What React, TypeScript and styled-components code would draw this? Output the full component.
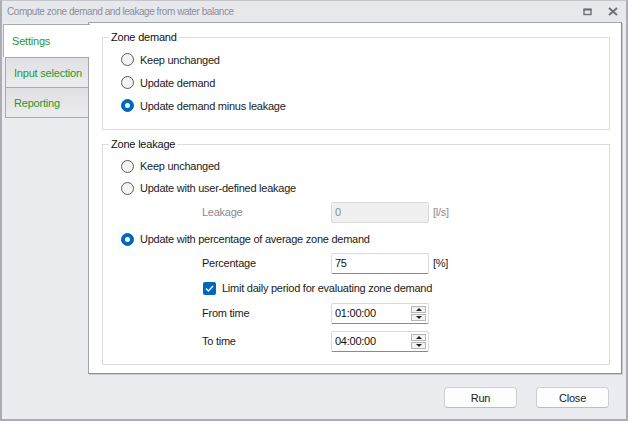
import React from "react";
import styled, { createGlobalStyle } from "styled-components";

const GlobalStyle = createGlobalStyle`
  html, body {
    margin: 0;
    padding: 0;
    background: #ebecef;
  }
  body {
    font-family: "Liberation Sans", Arial, sans-serif;
    font-size: 11px;
    color: #1b1b1b;
  }
`;

const Window = styled.div`
  width: 628px;
  height: 421px;
  box-sizing: border-box;
  display: flex;
  flex-direction: column;
  background: #ebecef;
  border: 2px solid #acacb4;
  border-top: 1px solid #c4c4cb;
`;

const TitleBar = styled.div`
  height: 21px;
  display: flex;
  align-items: center;
  padding-left: 5px;
  background: #e7e8ec;
  color: #8e8e99;
  font-size: 10px;
  letter-spacing: -0.45px;
`;

const TitleText = styled.span`
  flex: 1;
`;

const TitleButton = styled.span`
  width: 26px;
  display: flex;
  justify-content: center;
  align-items: center;
`;

const Body = styled.div`
  display: flex;
  height: 352px;
`;

const TabColumn = styled.div`
  width: 86px;
  display: flex;
  flex-direction: column;
  align-items: flex-end;
`;

const Tab = styled.div<{ $active?: boolean }>`
  box-sizing: border-box;
  display: flex;
  align-items: center;
  padding-left: 8px;
  color: #1f9a2a;
  font-size: 11px;
  letter-spacing: -0.2px;
  white-space: nowrap;
  position: relative;
  ${(p) =>
    p.$active
      ? `
    width: 87px;
    height: 33px;
    margin-top: 2px;
    margin-right: -2px;
    z-index: 1;
    background: #ffffff;
    border-top: 1px solid #a9a9b2;
    border-left: 1px solid #a9a9b2;
  `
      : `
    width: 83px;
    height: 31px;
    margin-top: -1px;
    background: linear-gradient(#e0e0e5, #ececef);
    border: 1px solid #a9a9b2;
    border-right: none;
  `}
  &:nth-child(2) {
    margin-top: 0;
  }
`;

const Panel = styled.div`
  width: 534px;
  box-sizing: border-box;
  background: #ffffff;
  border: 1px solid #a3a3ac;
  border-right-color: #8f8f99;
  border-bottom-color: #8f8f99;
  box-shadow: 1px 1px 0 #c9c9d0;
  padding: 8px 11px 0 13px;
`;

const Group = styled.fieldset<{ $gap?: number }>`
  margin: ${(p) => p.$gap ?? 0}px 0 0 0;
  padding: 0 0 12px 6px;
  border: 1px solid #dcdcdc;
`;

const Legend = styled.legend`
  padding: 0 2px;
  font-size: 11px;
  letter-spacing: -0.2px;
  line-height: 13px;
  color: #111;
`;

const Rows = styled.div<{ $top: number }>`
  padding-left: 12px;
  padding-top: ${(p) => p.$top}px;
  display: flex;
  flex-direction: column;
`;

const Row = styled.div<{ $gap?: number; $indent?: boolean; $h?: number }>`
  height: ${(p) => p.$h ?? 22}px;
  margin-top: ${(p) => p.$gap ?? 0}px;
  display: flex;
  align-items: center;
  padding-left: ${(p) => (p.$indent ? 81 : 0)}px;
  font-size: 11px;
  letter-spacing: -0.25px;
  white-space: nowrap;
`;

const RadioCircle = styled.span<{ $checked?: boolean }>`
  width: 13px;
  height: 13px;
  box-sizing: border-box;
  border-radius: 50%;
  margin-right: 6px;
  display: flex;
  align-items: center;
  justify-content: center;
  ${(p) =>
    p.$checked
      ? `background: #0067c0; border: 1px solid #0067c0;`
      : `background: #f4f4f4; border: 1px solid #5c5c5c;`}
  &::after {
    content: "";
    display: ${(p) => (p.$checked ? "block" : "none")};
    width: 5px;
    height: 5px;
    border-radius: 50%;
    background: #ffffff;
  }
`;

const CheckBox = styled.span`
  width: 13px;
  height: 13px;
  border-radius: 2px;
  background: #0067c0;
  margin-left: 1px;
  margin-right: 6px;
  display: flex;
  align-items: center;
  justify-content: center;
`;

const Label = styled.span<{ $disabled?: boolean }>`
  width: 129px;
  color: ${(p) => (p.$disabled ? "#8c8c8c" : "#1b1b1b")};
`;

const Field = styled.div<{ $disabled?: boolean }>`
  width: 98px;
  height: 21px;
  box-sizing: border-box;
  display: flex;
  align-items: center;
  padding-left: 3px;
  background: ${(p) => (p.$disabled ? "#f0f0f0" : "#ffffff")};
  border: 1px solid #dadada;
  border-bottom-color: ${(p) => (p.$disabled ? "#dadada" : "#8a8a8a")};
  color: ${(p) => (p.$disabled ? "#8c8c8c" : "#111")};
  border-radius: 2px;
`;

const FieldText = styled.span`
  flex: 1;
`;

const Unit = styled.span<{ $disabled?: boolean }>`
  margin-left: 4px;
  color: ${(p) => (p.$disabled ? "#8c8c8c" : "#1b1b1b")};
`;

const Spinner = styled.div`
  width: 15px;
  margin-right: 2px;
  display: flex;
  flex-direction: column;
  gap: 1px;
`;

const SpinHalf = styled.div<{ $down?: boolean }>`
  height: 7px;
  box-sizing: border-box;
  border: 1px solid #b5b5b5;
  background: #f3f3f3;
  display: flex;
  align-items: center;
  justify-content: center;
  &::after {
    content: "";
    border-left: 3px solid transparent;
    border-right: 3px solid transparent;
    ${(p) =>
      p.$down ? "border-top: 3px solid #222;" : "border-bottom: 3px solid #222;"}
  }
`;

const Footer = styled.div`
  flex: 1;
  display: flex;
  justify-content: flex-end;
  align-items: flex-start;
  gap: 19px;
  padding: 13px 17px 0 0;
`;

const Button = styled.button`
  width: 73px;
  height: 21px;
  box-sizing: border-box;
  border: 1px solid #cfcfcf;
  border-bottom-color: #bdbdbd;
  border-radius: 4px;
  background: #fdfdfd;
  font-family: "Liberation Sans", Arial, sans-serif;
  font-size: 11px;
  letter-spacing: -0.2px;
  color: #1b1b1b;
  padding: 0;
`;

const Radio: React.FC<{ checked?: boolean; children: React.ReactNode }> = ({
  checked,
  children,
}) => (
  <>
    <RadioCircle $checked={checked} />
    <span>{children}</span>
  </>
);

const TimeField: React.FC<{ value: string }> = ({ value }) => (
  <Field>
    <FieldText>{value}</FieldText>
    <Spinner>
      <SpinHalf />
      <SpinHalf $down />
    </Spinner>
  </Field>
);

export default function App() {
  return (
    <>
      <GlobalStyle />
      <Window>
        <TitleBar>
          <TitleText>Compute zone demand and leakage from water balance</TitleText>
          <TitleButton>
            <svg width="9" height="8" viewBox="0 0 9 8">
              <rect x="1" y="1.5" width="7" height="5" fill="none" stroke="#6e6e78" strokeWidth="1.4" />
              <rect x="0.5" y="0.5" width="8" height="2" fill="#6e6e78" />
            </svg>
          </TitleButton>
          <TitleButton>
            <svg width="10" height="9" viewBox="0 0 10 9">
              <path d="M1 1 L9 8 M9 1 L1 8" stroke="#6e6e78" strokeWidth="1.8" />
            </svg>
          </TitleButton>
        </TitleBar>
        <Body>
          <TabColumn>
            <Tab $active>Settings</Tab>
            <Tab>Input selection</Tab>
            <Tab>Reporting</Tab>
          </TabColumn>
          <Panel>
            <Group>
              <Legend>Zone demand</Legend>
              <Rows $top={4}>
                <Row $h={23}>
                  <Radio>Keep unchanged</Radio>
                </Row>
                <Row $h={23}>
                  <Radio>Update demand</Radio>
                </Row>
                <Row $h={23}>
                  <Radio checked>Update demand minus leakage</Radio>
                </Row>
              </Rows>
            </Group>
            <Group $gap={8}>
              <Legend>Zone leakage</Legend>
              <Rows $top={4}>
                <Row>
                  <Radio>Keep unchanged</Radio>
                </Row>
                <Row>
                  <Radio>Update with user-defined leakage</Radio>
                </Row>
                <Row $gap={2} $indent>
                  <Label $disabled>Leakage</Label>
                  <Field $disabled>0</Field>
                  <Unit $disabled>[l/s]</Unit>
                </Row>
                <Row $gap={5}>
                  <Radio checked>Update with percentage of average zone demand</Radio>
                </Row>
                <Row $gap={2} $indent>
                  <Label>Percentage</Label>
                  <Field>75</Field>
                  <Unit>[%]</Unit>
                </Row>
                <Row $gap={3} $indent>
                  <CheckBox>
                    <svg width="9" height="7" viewBox="0 0 9 7">
                      <path d="M1 3.5 L3.4 6 L8 1" fill="none" stroke="#fff" strokeWidth="1.3" />
                    </svg>
                  </CheckBox>
                  <span>Limit daily period for evaluating zone demand</span>
                </Row>
                <Row $gap={3} $indent>
                  <Label>From time</Label>
                  <TimeField value="01:00:00" />
                </Row>
                <Row $gap={6} $indent>
                  <Label>To time</Label>
                  <TimeField value="04:00:00" />
                </Row>
              </Rows>
            </Group>
          </Panel>
        </Body>
        <Footer>
          <Button>Run</Button>
          <Button>Close</Button>
        </Footer>
      </Window>
    </>
  );
}
